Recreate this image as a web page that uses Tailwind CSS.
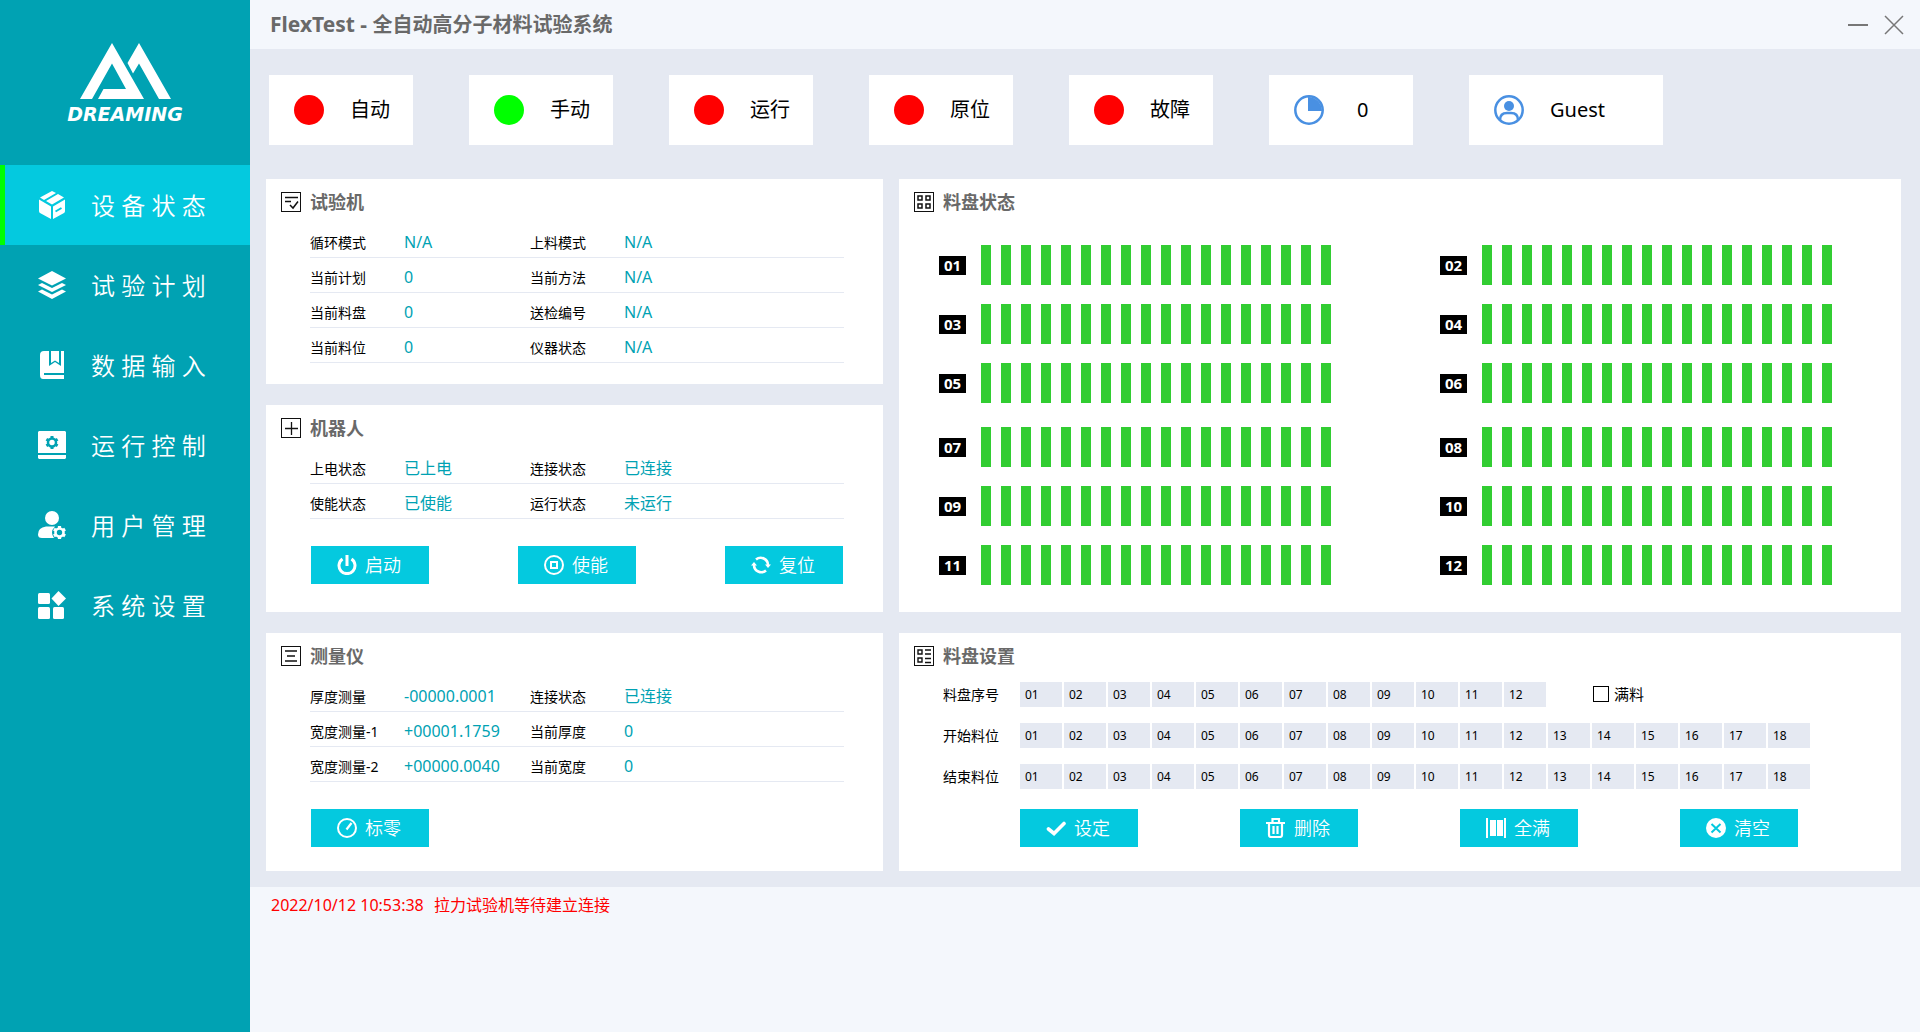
<!DOCTYPE html>
<html lang="zh-CN">
<head>
<meta charset="utf-8">
<meta name="viewport" content="width=device-width, initial-scale=1">
<title>FlexTest</title>
<script src="https://cdn.jsdelivr.net/npm/@tailwindcss/browser@4"></script>
</head>
<body class="flex min-h-screen bg-[#f4f7fc] font-['Noto_Sans','Noto_Sans_CJK_SC',sans-serif] text-black">

<!-- Sidebar -->
<aside class="flex w-[250px] shrink-0 flex-col bg-[#00a2b3] text-white">
  <div class="flex h-[165px] flex-col items-center pt-[43px]">
    <svg class="h-[57px] w-[93px]" viewBox="0 0 93 57" fill="#fff" aria-hidden="true">
      <path d="M1 56 L33 0 L65 56 H19 L24.500 46 H47 L33 20.500 L13 56Z"/>
      <path d="M48.500 20 L60 0 L92 56 H80 L60 20.500 L54 30.500Z"/>
    </svg>
    <span class="mt-0.5 font-['DejaVu_Sans'] text-[19px] leading-6 font-bold italic">DREAMING</span>
  </div>
  <nav class="flex flex-col text-2xl font-[350]">
    <a href="#" class="flex h-20 items-center gap-[25px] border-l-[5px] border-[#00ff00] bg-[#04c9df] pl-[33px]">
      <svg class="size-7" viewBox="0 0 28 28" fill="#fff" aria-hidden="true"><path d="M14 0 18 2 6 9 2 6.500ZM20 3 26 6.500 14 13.500 8 10ZM1 8.500 13 15.500V28L2 22Q1 21.500 1 20ZM27 8.500V20Q27 21.500 26 22L15 28V15.500Z"/><path d="M17.500 20.500 23.500 17" stroke="#04c9df" stroke-width="2"/></svg>
      <span class="pt-0.5">设 备 状 态</span>
    </a>
    <a href="#" class="flex h-20 items-center gap-[25px] border-l-[5px] border-transparent pl-[33px]">
      <svg class="size-7" viewBox="0 0 28 28" fill="#fff" aria-hidden="true"><path d="M14 0 28 7.500 14 14.500 0 7.500ZM0 14 4 12 14 17 24 12 28 14 14 21ZM0 20.500 4 18.500 14 23.500 24 18.500 28 20.500 14 28Z"/></svg>
      <span class="pt-0.5">试 验 计 划</span>
    </a>
    <a href="#" class="flex h-20 items-center gap-[25px] border-l-[5px] border-transparent pl-[33px]">
      <svg class="size-7" viewBox="0 0 28 28" fill="#fff" aria-hidden="true"><path d="M6 0H11V15L17 11 23 15V0H26V22H6V24H26V28H5Q2 28 2 24V4Q2 0 6 0Z"/><path d="M13 0H21V12L17 9.500 13 12Z"/></svg>
      <span class="pt-0.5">数 据 输 入</span>
    </a>
    <a href="#" class="flex h-20 items-center gap-[25px] border-l-[5px] border-transparent pl-[33px]">
      <svg class="size-7" viewBox="0 0 28 28" aria-hidden="true"><path fill="#fff" d="M1 0H27L28 1V22H0V1ZM0 24H28V27L27 28H1L0 27Z"/><circle cx="14" cy="11.500" r="4" fill="none" stroke="#00a2b3" stroke-width="2.500"/><path d="M14 5V8M14 15V18M8.400 8.200 10.900 9.700M17.100 13.300 19.600 14.800M8.400 14.800 10.900 13.300M17.100 9.700 19.600 8.200" stroke="#00a2b3" stroke-width="3"/></svg>
      <span class="pt-0.5">运 行 控 制</span>
    </a>
    <a href="#" class="flex h-20 items-center gap-[25px] border-l-[5px] border-transparent pl-[33px]">
      <svg class="size-7" viewBox="0 0 28 28" aria-hidden="true"><circle cx="14" cy="7" r="7" fill="#fff"/><path fill="#fff" d="M8 15.500H17Q14 18.500 14 21.500 14 24.500 16 27H4Q0 27 0 23.500 0 16.500 8 15.500Z"/><circle cx="21.500" cy="21.500" r="4" fill="none" stroke="#fff" stroke-width="2.600"/><path d="M21.500 15V18M21.500 25V28M15.900 18.200 18.400 19.700M24.600 23.300 27.100 24.800M15.900 24.800 18.400 23.300M24.600 19.700 27.100 18.200" stroke="#fff" stroke-width="3.200"/></svg>
      <span class="pt-0.5">用 户 管 理</span>
    </a>
    <a href="#" class="flex h-20 items-center gap-[25px] border-l-[5px] border-transparent pl-[33px]">
      <svg class="size-7" viewBox="0 0 28 28" fill="#fff" aria-hidden="true"><rect y="2" width="12" height="11" rx="1.500"/><rect y="16" width="12" height="12" rx="1.500"/><rect x="15" y="16" width="11" height="12" rx="1.500"/><path d="M20.500 0 28 7.500 20.500 15 13.500 7.500Z"/></svg>
      <span class="pt-0.5">系 统 设 置</span>
    </a>
  </nav>
</aside>

<main class="flex min-w-0 flex-1 flex-col">
  <!-- Title bar -->
  <header class="flex h-[49px] items-center justify-between pr-4 pl-5">
    <h1 class="text-xl font-bold text-[#696969]"><span class="text-[21px]">FlexTest - </span>全自动高分子材料试验系统</h1>
    <div class="flex gap-4">
      <button type="button" aria-label="最小化"><svg class="size-5" viewBox="0 0 20 20" stroke="#777" stroke-width="2" aria-hidden="true"><path d="M0 10H20"/></svg></button>
      <button type="button" aria-label="关闭"><svg class="size-5" viewBox="0 0 20 20" stroke="#777" stroke-width="1.500" aria-hidden="true"><path d="M1 1 19 19M19 1 1 19"/></svg></button>
    </div>
  </header>

  <div class="flex flex-col gap-[34px] bg-[#e5e9f2] pt-[26px] pr-[19px] pb-4 pl-4">
    <!-- Status indicators -->
    <section class="flex gap-14 pl-[3px] text-xl">
      <div class="flex h-[70px] w-36 items-center bg-white pl-[25px]"><span class="mr-[26px] size-[30px] rounded-full bg-[#ff0000]"></span>自动</div>
      <div class="flex h-[70px] w-36 items-center bg-white pl-[25px]"><span class="mr-[26px] size-[30px] rounded-full bg-[#00ff00]"></span>手动</div>
      <div class="flex h-[70px] w-36 items-center bg-white pl-[25px]"><span class="mr-[26px] size-[30px] rounded-full bg-[#ff0000]"></span>运行</div>
      <div class="flex h-[70px] w-36 items-center bg-white pl-[25px]"><span class="mr-[26px] size-[30px] rounded-full bg-[#ff0000]"></span>原位</div>
      <div class="flex h-[70px] w-36 items-center bg-white pl-[25px]"><span class="mr-[26px] size-[30px] rounded-full bg-[#ff0000]"></span>故障</div>
      <div class="flex h-[70px] w-36 items-center bg-white pl-[25px]">
        <svg class="mr-[33px] size-[30px]" viewBox="0 0 30 30" aria-hidden="true"><circle cx="15" cy="15" r="13.700" fill="none" stroke="#4990e2" stroke-width="2.500"/><path d="M14 2A14 14 0 0 1 28 16H14Z" fill="#4990e2"/></svg>0
      </div>
      <div class="flex h-[70px] w-[194px] items-center bg-white pl-[25px]">
        <svg class="mr-[26px] size-[30px]" viewBox="0 0 30 30" fill="none" stroke="#4990e2" stroke-width="2.500" aria-hidden="true"><circle cx="15" cy="15" r="13.700"/><circle cx="15" cy="11" r="5" fill="#4990e2" stroke="none"/><path d="M6 25Q6 18 13 18H17Q24 18 24 25"/></svg>Guest
      </div>
    </section>

    <div class="grid grid-cols-[617fr_1002fr] gap-x-4 gap-y-[21px]">
      <div class="flex flex-col gap-[21px]">
        <!-- Testing machine -->
        <section class="h-[205px] bg-white pr-[39px] pl-[15px]">
          <h2 class="flex h-11 items-center gap-[9px] pt-0.5 text-lg font-bold text-[#696969]">
            <svg class="size-5" viewBox="0 0 20 20" fill="none" stroke="#111" aria-hidden="true"><rect x=".5" y=".5" width="19" height="19"/><path d="M4 5.500H17M4 9.500H10M9 13 12 16 17 9.500" stroke-width="1.500"/></svg>试验机</h2>
          <div data-rows="循环模式,N/A,上料模式,N/A|当前计划,0,当前方法,N/A|当前料盘,0,送检编号,N/A|当前料位,0,仪器状态,N/A" class="pl-[29px]"></div>
        </section>
        <!-- Robot -->
        <section class="h-[207px] bg-white pr-[39px] pl-[15px]">
          <h2 class="flex h-11 items-center gap-[9px] pt-0.5 text-lg font-bold text-[#696969]">
            <svg class="size-5" viewBox="0 0 20 20" fill="none" stroke="#111" aria-hidden="true"><rect x=".5" y=".5" width="19" height="19"/><path d="M4 10.500H17M10.500 4V17" stroke-width="1.300"/></svg>机器人</h2>
          <div data-rows="上电状态,已上电,连接状态,已连接|使能状态,已使能,运行状态,未运行" class="pl-[29px]"></div>
          <div class="mt-[27px] flex justify-between pr-px pl-[30px] text-lg font-[350] text-white">
            <button type="button" class="flex h-[38px] w-[118px] items-center justify-center gap-2 bg-[#04c9df] pr-0.5"><svg class="size-5" viewBox="0 0 20 20" fill="none" stroke="#fff" stroke-width="3" aria-hidden="true"><path d="M10 0V11M5.500 4A8 8 0 1 0 14.500 4"/></svg>启动</button>
            <button type="button" class="flex h-[38px] w-[118px] items-center justify-center gap-2 bg-[#04c9df] pr-0.5"><svg class="size-5" viewBox="0 0 20 20" fill="none" stroke="#fff" stroke-width="2" aria-hidden="true"><circle cx="10" cy="10" r="9"/><rect x="7" y="7" width="6" height="6"/></svg>使能</button>
            <button type="button" class="flex h-[38px] w-[118px] items-center justify-center gap-2 bg-[#04c9df] pr-0.5"><svg class="size-5" viewBox="0 0 20 20" fill="none" stroke="#fff" stroke-width="2.600" aria-hidden="true"><path d="M5 4.500A7.300 7.300 0 0 1 17 10M15 15.500A7.300 7.300 0 0 1 3 10"/><path d="M14 9.500H20L17 13ZM0 10.500H6L3 7Z" fill="#fff" stroke="none"/></svg>复位</button>
          </div>
        </section>
      </div>

      <!-- Tray status -->
      <section class="bg-white pl-[15px]">
        <h2 class="flex h-11 items-center gap-[9px] pt-0.5 text-lg font-bold text-[#696969]">
          <svg class="size-5" viewBox="0 0 20 20" fill="none" stroke="#111" aria-hidden="true"><rect x=".5" y=".5" width="19" height="19"/><path d="M4 4H8V8H4ZM12 4H16V8H12ZM4 12H8V16H4ZM12 12H16V16H12Z" stroke-width="1.500"/></svg>料盘状态</h2>
        <div class="mt-[22px] flex flex-col gap-6 pl-[25px]">
          <div data-trays="1" class="grid grid-cols-[501fr_461fr] gap-y-[19px]"></div>
          <div data-trays="7" class="grid grid-cols-[501fr_461fr] gap-y-[19px]"></div>
        </div>
      </section>

      <!-- Gauge -->
      <section class="h-[238px] bg-white pr-[39px] pl-[15px]">
        <h2 class="flex h-11 items-center gap-[9px] pt-0.5 text-lg font-bold text-[#696969]">
          <svg class="size-5" viewBox="0 0 20 20" fill="none" stroke="#111" aria-hidden="true"><rect x=".5" y=".5" width="19" height="19"/><path d="M4 5H16M6 10H14M4 15H16" stroke-width="1.300"/></svg>测量仪</h2>
        <div data-rows="厚度测量,-00000.0001,连接状态,已连接|宽度测量-1,+00001.1759,当前厚度,0|宽度测量-2,+00000.0040,当前宽度,0" class="pl-[29px]"></div>
        <div class="mt-[27px] flex pl-[30px] text-lg font-[350] text-white">
          <button type="button" class="flex h-[38px] w-[118px] items-center justify-center gap-2 bg-[#04c9df] pr-0.5"><svg class="size-5" viewBox="0 0 20 20" fill="none" stroke="#fff" stroke-width="2" aria-hidden="true"><circle cx="10" cy="10" r="9"/><path d="M9.500 11.500 14.500 5" stroke-width="2.200"/></svg>标零</button>
        </div>
      </section>

      <!-- Tray settings -->
      <section class="h-[238px] bg-white pr-[39px] pl-[15px]">
        <h2 class="flex h-11 items-center gap-[9px] pt-0.5 text-lg font-bold text-[#696969]">
          <svg class="size-5" viewBox="0 0 20 20" fill="none" stroke="#111" aria-hidden="true"><rect x=".5" y=".5" width="19" height="19"/><path d="M4 4H8V8H4ZM4 12H8V16H4ZM11 4H17M11 8H17M11 12.500H17M11 16.500H17" stroke-width="1.400"/></svg>料盘设置</h2>
        <div class="mt-[5px] flex flex-col gap-4 pl-[29px] text-sm">
          <div class="flex h-[25px] items-center">
            <span class="w-[77px] shrink-0">料盘序号</span>
            <div data-cells="12" class="flex gap-0.5"></div>
            <label class="ml-[47px] flex items-center gap-[5px] text-[15px]"><input type="checkbox" class="size-4 appearance-none border border-black bg-white">满料</label>
          </div>
          <div class="flex h-[25px] items-center">
            <span class="w-[77px] shrink-0">开始料位</span>
            <div data-cells="18" class="flex gap-0.5"></div>
          </div>
          <div class="flex h-[25px] items-center">
            <span class="w-[77px] shrink-0">结束料位</span>
            <div data-cells="18" class="flex gap-0.5"></div>
          </div>
        </div>
        <div class="mt-5 flex gap-[102px] pl-[106px] text-lg font-[350] text-white">
          <button type="button" class="flex h-[38px] w-[118px] items-center justify-center gap-2 bg-[#04c9df] pr-0.5"><svg class="size-5" viewBox="0 0 20 20" fill="none" stroke="#fff" stroke-width="3.600" stroke-linecap="round" aria-hidden="true"><path d="M2.500 11 8 15.500 18 5.500"/></svg>设定</button>
          <button type="button" class="flex h-[38px] w-[118px] items-center justify-center gap-2 bg-[#04c9df] pr-0.5"><svg class="size-5" viewBox="0 0 20 20" fill="none" stroke="#fff" stroke-width="2.200" aria-hidden="true"><path d="M0 5H19M6.500 4V1H13V4M3 5V17Q3 19 5 19H14Q16 19 16 17V5M7.500 8V16M11.500 8V16"/></svg>删除</button>
          <button type="button" class="flex h-[38px] w-[118px] items-center justify-center gap-2 bg-[#04c9df] pr-0.5"><svg class="size-5" viewBox="0 0 20 20" fill="#fff" aria-hidden="true"><path d="M0 0H2V20H0ZM4 2H10V18H4ZM11 2H17V18H11ZM18 0H20V20H18Z"/></svg>全满</button>
          <button type="button" class="flex h-[38px] w-[118px] items-center justify-center gap-2 bg-[#04c9df] pr-0.5"><svg class="size-5" viewBox="0 0 20 20" aria-hidden="true"><circle cx="10" cy="10" r="10" fill="#fff"/><path d="M5.500 6 14.500 14.500M14.500 6 5.500 14.500" stroke="#04c9df" stroke-width="2"/></svg>清空</button>
        </div>
      </section>
    </div>
  </div>

  <!-- Message log -->
  <footer class="px-[21px] py-1.5 text-base text-[#ff0000]"><span class="mr-1.5">2022/10/12 10:53:38</span> <span>拉力试验机等待建立连接</span></footer>
</main>

<script>
const pad = n => String(n).padStart(2, '0');

document.querySelectorAll('[data-rows]').forEach(box => {
  box.innerHTML = box.dataset.rows.split('|').map(row => {
    const [a, b, c, d] = row.split(',');
    return `<dl class="grid h-[35px] grid-cols-[94px_126px_94px_1fr] items-center border-b border-[#e5e9f2] pt-1 text-sm">
      <dt class="pt-0.5">${a}</dt><dd class="text-base text-[#00a2b3]">${b}</dd>
      <dt class="pt-0.5">${c}</dt><dd class="text-base text-[#00a2b3]">${d}</dd></dl>`;
  }).join('');
});

document.querySelectorAll('[data-trays]').forEach(box => {
  box.innerHTML = Array.from({length: 6}, (_, i) => `
  <div class="flex h-10 items-center">
    <span class="mr-[15px] h-[19px] w-[27px] bg-black text-center text-[15px] leading-[19px] font-bold text-white">${pad(i + +box.dataset.trays)}</span>
    <div class="flex gap-2.5">${'<i class="h-10 w-2.5 bg-[#32cd32]"></i>'.repeat(18)}</div>
  </div>`).join('');
});

document.querySelectorAll('[data-cells]').forEach(box => {
  box.innerHTML = Array.from({length: +box.dataset.cells}, (_, i) =>
    `<button type="button" class="h-[25px] w-[42px] bg-[#e5e9f2] pl-[5px] text-left text-xs">${pad(i + 1)}</button>`).join('');
});
</script>
</body>
</html>
